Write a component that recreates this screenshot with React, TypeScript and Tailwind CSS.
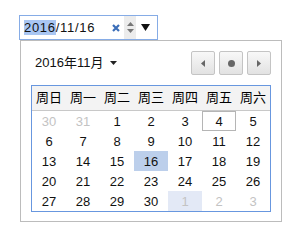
import React from "react";

type Day = { n: number; muted?: boolean };

const weekdays = ["周日", "周一", "周二", "周三", "周四", "周五", "周六"];

const weeks: Day[][] = [
  [{ n: 30, muted: true }, { n: 31, muted: true }, { n: 1 }, { n: 2 }, { n: 3 }, { n: 4 }, { n: 5 }],
  [6, 7, 8, 9, 10, 11, 12].map((n) => ({ n })),
  [13, 14, 15, 16, 17, 18, 19].map((n) => ({ n })),
  [20, 21, 22, 23, 24, 25, 26].map((n) => ({ n })),
  [{ n: 27 }, { n: 28 }, { n: 29 }, { n: 30 }, { n: 1, muted: true }, { n: 2, muted: true }, { n: 3, muted: true }],
];

const NavButton: React.FC<{ children: React.ReactNode }> = ({ children }) => (
  <button className="w-6 h-6 flex items-center justify-center rounded-[2px] border border-[#c4c4c4] bg-gradient-to-b from-[#f8f8f8] to-[#e2e2e2]">
    {children}
  </button>
);

export default function App() {
  return (
    <div className="pl-[19px] pt-[15px] font-['Liberation_Sans','Noto_Sans_CJK_SC',sans-serif] text-[13px] text-[#111]">
      {/* date field */}
      <div className="w-[139px] h-[25px] border border-[#86ace6] flex items-center bg-white">
        <div className="pl-[4px] flex items-center text-[13px] leading-[15px] tracking-[0.7px]">
          <span className="bg-[#a9c6f2]">2016</span>
          <span>/11/16</span>
        </div>
        <svg className="ml-auto mr-[4px]" width="8" height="8" viewBox="0 0 8 8">
          <path d="M1 1L7 7M7 1L1 7" stroke="#3b6eb8" strokeWidth="2.2" />
        </svg>
        <div className="w-[12px] h-[23px] bg-[#ececec] flex flex-col items-center justify-center gap-[3px] mr-[5px]">
          <svg width="7" height="4" viewBox="0 0 7 4"><path d="M3.5 0L7 4H0z" fill="#777" /></svg>
          <svg width="7" height="4" viewBox="0 0 7 4"><path d="M0 0h7L3.5 4z" fill="#777" /></svg>
        </div>
        <svg className="mr-[7px]" width="9" height="7" viewBox="0 0 9 7"><path d="M0 0h9L4.5 7z" fill="#111" /></svg>
      </div>

      {/* popup */}
      <div className="ml-px w-[262px] h-[182px] border border-[#bcbcbc] bg-white px-[10px] pt-[10px]">
        <div className="flex items-center h-6">
          <div className="flex items-center gap-[7px] pl-[4px]">
            <span>2016年11月</span>
            <svg width="7" height="4" viewBox="0 0 7 4"><path d="M0 0h7L3.5 4z" fill="#222" /></svg>
          </div>
          <div className="ml-auto flex gap-[4px]">
            <NavButton>
              <svg width="4" height="7" viewBox="0 0 4 7"><path d="M4 0v7L0 3.5z" fill="#666" /></svg>
            </NavButton>
            <NavButton>
              <span className="w-[7px] h-[7px] rounded-full bg-[#666]" />
            </NavButton>
            <NavButton>
              <svg width="4" height="7" viewBox="0 0 4 7"><path d="M0 0v7L4 3.5z" fill="#666" /></svg>
            </NavButton>
          </div>
        </div>

        <div className="mt-[10px] w-[240px] border border-[#6897df]">
          <div className="grid grid-cols-7 h-[25px] bg-[#f3f3f3] border-b border-[#c8c8c8]">
            {weekdays.map((w) => (
              <div key={w} className="flex items-center justify-center text-[13px] text-black">
                {w}
              </div>
            ))}
          </div>
          {weeks.map((week, i) => (
            <div key={i} className="grid grid-cols-7 h-5">
              {week.map((d, j) => {
                const today = i === 0 && j === 5;
                const selected = i === 2 && j === 3;
                const hover = i === 4 && j === 4;
                return (
                  <div
                    key={j}
                    className={`flex items-center justify-center leading-none ${
                      d.muted ? "text-[#c3c3c3]" : "text-[#111]"
                    } ${today ? "border border-[#b5b5b5]" : ""} ${
                      selected ? "bg-[#bccfeb]" : ""
                    } ${hover ? "bg-[#e3e9f6]" : ""}`}
                  >
                    {d.n}
                  </div>
                );
              })}
            </div>
          ))}
        </div>
      </div>
    </div>
  );
}
